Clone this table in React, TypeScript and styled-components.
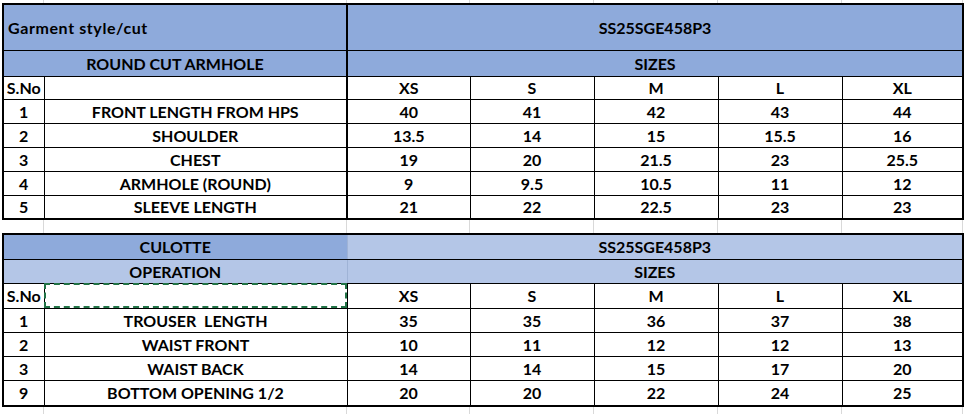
import styled, { createGlobalStyle } from 'styled-components'

const GlobalStyle = createGlobalStyle`
  html, body {
    margin: 0;
    padding: 0;
    background: #ffffff;
  }
  body {
    font-family: Lato, 'Open Sans', sans-serif;
    color: #000000;
  }
`

const COLS = [41, 303, 123, 124, 124, 124, 121]
const GRID = '#d9d9d9'
const DARK_BLUE = '#8eaadb'
const LIGHT_BLUE = '#b4c6e7'

const Sheet = styled.div`
  width: 965px;
  height: 414px;
  overflow: hidden;
  display: flex;
  flex-direction: column;
  padding-left: 2px;
`

// strip of empty spreadsheet cells showing the light gridlines
const Strip = styled.div<{ $h: number }>`
  display: flex;
  height: ${p => p.$h}px;
  flex-shrink: 0;
`
const StripCell = styled.div<{ $w: number }>`
  width: ${p => p.$w}px;
  flex-shrink: 0;
  border-right: 1px solid ${GRID};
  box-sizing: border-box;
`

const Table = styled.table`
  border-collapse: collapse;
  table-layout: fixed;
  width: 961px;
  flex-shrink: 0;
  border: 2px solid #000;
`

const Cell = styled.td<{
  $h?: number
  $fill?: string
  $left?: boolean
  $wide?: boolean
  $thickRight?: boolean
  $softRight?: boolean
}>`
  height: ${p => p.$h ?? 24}px;
  padding: 1px ${p => (p.$left ? '4px' : '0')} 0;
  box-sizing: border-box;
  font-size: 16px;
  font-weight: 700;
  line-height: 1;
  letter-spacing: ${p => (p.$wide ? '0.6px' : '0')};
  white-space: pre;
  overflow: hidden;
  text-align: ${p => (p.$left ? 'left' : 'center')};
  vertical-align: middle;
  background: ${p => p.$fill ?? '#ffffff'};
  border: 1px solid #000;
  ${p => p.$thickRight && 'border-right: 2px solid #000;'}
  ${p => p.$softRight && `border-right: 1px solid ${p.$fill ? '#9fb3d6' : GRID};`}
`

const MarqueeCell = styled(Cell)`
  position: relative;
  outline: 2px dashed #217346;
  outline-offset: -2px;
  &::after {
    content: '';
    position: absolute;
    right: -3px;
    bottom: -3px;
    width: 5px;
    height: 5px;
    background: #217346;
  }
`

const SIZES = ['XS', 'S', 'M', 'L', 'XL']

const TOP_ROWS = [
  ['1', 'FRONT LENGTH FROM HPS', '40', '41', '42', '43', '44'],
  ['2', 'SHOULDER', '13.5', '14', '15', '15.5', '16'],
  ['3', 'CHEST', '19', '20', '21.5', '23', '25.5'],
  ['4', 'ARMHOLE (ROUND)', '9', '9.5', '10.5', '11', '12'],
  ['5', 'SLEEVE LENGTH', '21', '22', '22.5', '23', '23'],
]

const BOTTOM_ROWS = [
  ['1', 'TROUSER  LENGTH', '35', '35', '36', '37', '38'],
  ['2', 'WAIST FRONT', '10', '11', '12', '12', '13'],
  ['3', 'WAIST BACK', '14', '14', '15', '17', '20'],
  ['9', 'BOTTOM OPENING 1/2', '20', '20', '22', '24', '25'],
]

const GridStrip = ({ h }: { h: number }) => (
  <Strip $h={h}>
    {COLS.map((w, i) => (
      <StripCell key={i} $w={i === 0 ? w + 1 : w} />
    ))}
  </Strip>
)

const Cols = () => (
  <colgroup>
    {COLS.map((w, i) => (
      <col key={i} style={{ width: w }} />
    ))}
  </colgroup>
)

const App = () => {
  return (
    <>
      <GlobalStyle />
      <Sheet>
        <GridStrip h={3} />

        <Table>
          <Cols />
          <tbody>
            <tr>
              <Cell colSpan={2} $h={46} $fill={DARK_BLUE} $left $wide $thickRight>
                Garment style/cut
              </Cell>
              <Cell colSpan={5} $h={46} $fill={DARK_BLUE}>
                SS25SGE458P3
              </Cell>
            </tr>
            <tr>
              <Cell colSpan={2} $h={26} $fill={DARK_BLUE} $thickRight>
                ROUND CUT ARMHOLE
              </Cell>
              <Cell colSpan={5} $h={26} $fill={DARK_BLUE}>
                SIZES
              </Cell>
            </tr>
            <tr>
              <Cell $h={23}>S.No</Cell>
              <Cell $h={23} $thickRight />
              {SIZES.map(s => (
                <Cell key={s} $h={23}>
                  {s}
                </Cell>
              ))}
            </tr>
            {TOP_ROWS.map(row => (
              <tr key={row[0]}>
                {row.map((v, i) => (
                  <Cell key={i} $thickRight={i === 1}>
                    {v}
                  </Cell>
                ))}
              </tr>
            ))}
          </tbody>
        </Table>

        <GridStrip h={13} />

        <Table>
          <Cols />
          <tbody>
            <tr>
              <Cell colSpan={2} $h={25} $fill={DARK_BLUE} $softRight>
                CULOTTE
              </Cell>
              <Cell colSpan={5} $h={25} $fill={LIGHT_BLUE}>
                SS25SGE458P3
              </Cell>
            </tr>
            <tr>
              <Cell colSpan={2} $h={24} $fill={LIGHT_BLUE} $softRight>
                OPERATION
              </Cell>
              <Cell colSpan={5} $h={24} $fill={LIGHT_BLUE}>
                SIZES
              </Cell>
            </tr>
            <tr>
              <Cell $h={25}>S.No</Cell>
              <MarqueeCell $h={25} />
              {SIZES.map(s => (
                <Cell key={s} $h={25}>
                  {s}
                </Cell>
              ))}
            </tr>
            {BOTTOM_ROWS.map((row, r) => (
              <tr key={row[1]}>
                {row.map((v, i) => (
                  <Cell key={i} $h={r === BOTTOM_ROWS.length - 1 ? 26 : 24}>
                    {v}
                  </Cell>
                ))}
              </tr>
            ))}
          </tbody>
        </Table>

        <GridStrip h={10} />
      </Sheet>
    </>
  )
}

export default App
